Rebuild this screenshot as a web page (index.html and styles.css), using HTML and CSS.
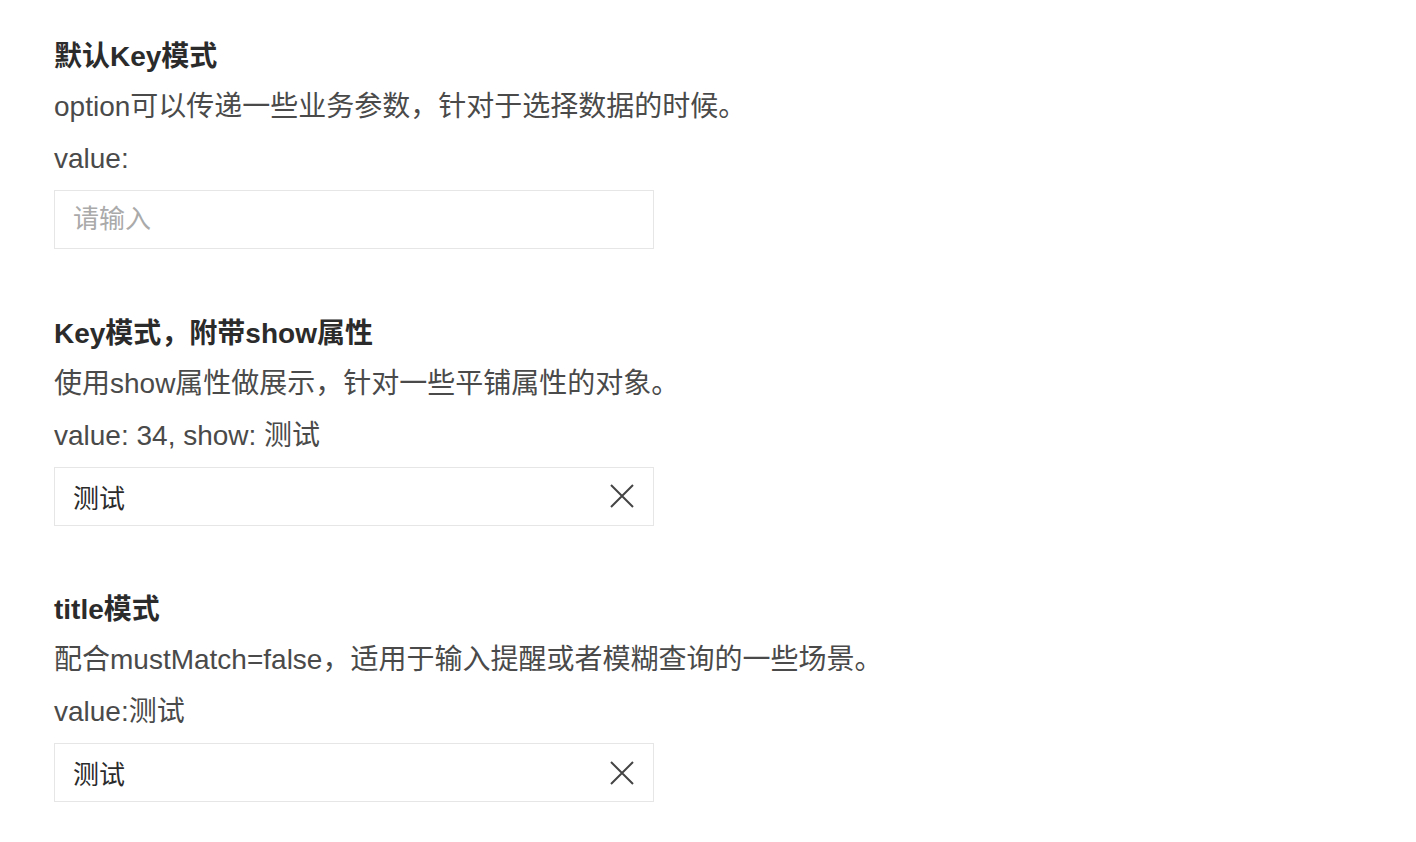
FILE: index.html
```html
<!DOCTYPE html>
<html lang="zh-CN">
<head>
    <meta charset="UTF-8">
    <title>Select 模式</title>
    <link rel="stylesheet" href="styles.css">
</head>
<body>
    <div class="demo-page">
        <!-- 默认Key模式 -->
        <section class="demo-block">
            <h3 class="demo-title">默认Key模式</h3>
            <p class="demo-desc">option可以传递一些业务参数，针对于选择数据的时候。</p>
            <p class="demo-value">value:</p>
            <div class="select-input">
                <input type="text" placeholder="请输入">
            </div>
        </section>

        <!-- Key模式，附带show属性 -->
        <section class="demo-block">
            <h3 class="demo-title">Key模式，附带show属性</h3>
            <p class="demo-desc">使用show属性做展示，针对一些平铺属性的对象。</p>
            <p class="demo-value">value: 34, show: 测试</p>
            <div class="select-input">
                <input type="text" value="测试">
                <span class="clear-icon">
                    <svg viewBox="0 0 24 24" width="24" height="24"><path d="M1 1 L23 23 M23 1 L1 23"/></svg>
                </span>
            </div>
        </section>

        <!-- title模式 -->
        <section class="demo-block">
            <h3 class="demo-title">title模式</h3>
            <p class="demo-desc">配合mustMatch=false，适用于输入提醒或者模糊查询的一些场景。</p>
            <p class="demo-value">value:测试</p>
            <div class="select-input">
                <input type="text" value="测试">
                <span class="clear-icon">
                    <svg viewBox="0 0 24 24" width="24" height="24"><path d="M1 1 L23 23 M23 1 L1 23"/></svg>
                </span>
            </div>
        </section>
    </div>
</body>
</html>
```

FILE: styles.css
```css
:root {
    --text-color: #333;
    --desc-color: #4a4a4a;
    --border-color: #e6e6e6;
    --placeholder-color: #aaa;
}

* {
    margin: 0;
    padding: 0;
    box-sizing: border-box;
}

body {
    font-family: "Liberation Sans", "Noto Sans CJK SC", sans-serif;
    font-size: 28px;
    color: var(--text-color);
    background: #fff;
}

.demo-page {
    padding: 33px 54px 0;
}

.demo-block {
    margin-bottom: 60.5px;
}

.demo-block:last-child {
    margin-bottom: 0;
}

.demo-title {
    font-size: 28px;
    font-weight: 700;
    line-height: 48px;
    color: #2b2b2b;
}

.demo-desc,
.demo-value {
    line-height: 52px;
    color: var(--desc-color);
}

.select-input {
    display: flex;
    align-items: center;
    width: 600px;
    height: 59px;
    margin-top: 5px;
    padding: 0 18px;
    border: 1.5px solid var(--border-color);
    background: #fff;
}

.select-input input {
    flex: 1;
    border: none;
    outline: none;
    font: inherit;
    font-size: 26px;
    color: #2b2b2b;
    background: transparent;
}

.select-input input::placeholder {
    color: var(--placeholder-color);
}

.clear-icon {
    display: flex;
    width: 24px;
    height: 24px;
    margin-right: 1px;
}

.clear-icon svg {
    stroke: #444;
    stroke-width: 2;
    fill: none;
}
```
